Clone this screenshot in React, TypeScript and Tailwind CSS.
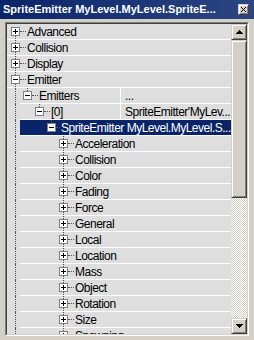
import React from 'react';

type Row = { d: number; label: string; open?: boolean; value?: string; selected?: boolean; first?: boolean };

const rows: Row[] = [
  { d: 0, label: 'Advanced', first: true },
  { d: 0, label: 'Collision' },
  { d: 0, label: 'Display' },
  { d: 0, label: 'Emitter', open: true },
  { d: 1, label: 'Emitters', open: true, value: '...' },
  { d: 2, label: '[0]', open: true, value: "SpriteEmitter'MyLev..." },
  { d: 3, label: 'SpriteEmitter MyLevel.MyLevel.S...', open: true, selected: true },
  ...[
    'Acceleration',
    'Collision',
    'Color',
    'Fading',
    'Force',
    'General',
    'Local',
    'Location',
    'Mass',
    'Object',
    'Rotation',
    'Size',
    'Spawning',
  ].map((l) => ({ d: 4, label: l })),
];

function Box({ open }: { open?: boolean }) {
  return (
    <svg width="9" height="9" viewBox="0 0 9 9" shapeRendering="crispEdges" className="block shrink-0">
      <rect x="0.5" y="0.5" width="8" height="8" fill="#fff" stroke="#808080" />
      <path d="M2 4.5h5" stroke="#000" />
      {!open && <path d="M4.5 2v5" stroke="#000" />}
    </svg>
  );
}

function BoxCell({ open, above, below }: { open?: boolean; above?: boolean; below?: boolean }) {
  return (
    <div className="flex h-full w-[9px] shrink-0 flex-col items-center">
      <div className={above ? 'h-[3px] w-0 border-l border-dotted border-[#505050]' : 'h-[3px] w-0'} />
      <Box open={open} />
      <div className={below ? 'w-0 flex-1 border-l border-dotted border-[#505050]' : 'w-0 flex-1'} />
    </div>
  );
}

function Stub({ short }: { short?: boolean }) {
  return (
    <div
      className={
        short
          ? 'h-0 w-[4px] shrink-0 border-t border-dotted border-[#505050]'
          : 'h-0 w-[6px] shrink-0 border-t border-dotted border-[#505050]'
      }
    />
  );
}

function TreeRow({ r }: { r: Row }) {
  if (r.d === 0) {
    return (
      <div className="flex h-4 shrink-0 items-center border-b border-white pl-[4px]">
        <BoxCell open={r.open} above={!r.first} below />
        <Stub />
        <span className="ml-px whitespace-nowrap">{r.label}</span>
      </div>
    );
  }
  const pad =
    r.d === 1 ? 'pl-[3px]' : r.d === 2 ? 'pl-[15px]' : r.d === 3 ? 'pl-[27px]' : 'pl-[39px]';
  const single = r.d < 4;
  const name = (
    <>
      <BoxCell open={r.open} above below={!single} />
      <Stub short={r.selected} />
      <span className="ml-px whitespace-nowrap">{r.label}</span>
    </>
  );
  return (
    <div className="flex h-4 shrink-0">
      <div className="flex h-full w-[13px] shrink-0 pl-[8px]">
        <div className="h-full w-0 border-l border-dotted border-[#505050]" />
      </div>
      {r.value !== undefined ? (
        <div className="flex h-full flex-1 border-b border-white">
          <div className={`flex h-full w-[101px] shrink-0 items-center overflow-hidden border-r border-white ${pad}`}>
            {name}
          </div>
          <div className="flex h-full items-center whitespace-nowrap pl-[4px]">{r.value}</div>
        </div>
      ) : (
        <div
          className={
            r.selected
              ? `flex h-full flex-1 items-center overflow-hidden border-b border-white bg-[#0a246a] text-white ${pad}`
              : `flex h-full flex-1 items-center border-b border-white ${pad}`
          }
        >
          {name}
        </div>
      )}
    </div>
  );
}

function Arrow({ down }: { down?: boolean }) {
  return (
    <svg width="7" height="4" viewBox="0 0 7 4" shapeRendering="crispEdges" className="block">
      <path
        d={down ? 'M0 0h7v1h-1v1h-1v1h-1v1h-1v-1h-1v-1h-1v-1h-1z' : 'M3 0h1v1h1v1h1v1h1v1H0v-1h1v-1h1v-1h1z'}
        fill="#000"
      />
    </svg>
  );
}

const bevel =
  'border border-t-[#d4d0c8] border-l-[#d4d0c8] border-r-[#404040] border-b-[#404040] bg-[#d4d0c8] shadow-[inset_1px_1px_0_#ffffff,inset_-1px_-1px_0_#808080]';

export default function App() {
  return (
    <div
      className="flex h-[340px] w-[254px] flex-col overflow-hidden bg-[#d4d0c8] text-[12px] tracking-[-0.5px] text-black"
      style={{ fontFamily: '"Liberation Sans", Arial, sans-serif' }}
    >
      <div className="flex h-[19px] shrink-0 items-center justify-between bg-linear-to-r from-[#0a246a] to-[#2c4683] pl-[3px] pr-[5px]">
        <span className="whitespace-nowrap text-[11px] font-bold tracking-normal text-white">
          SpriteEmitter MyLevel.MyLevel.SpriteE...
        </span>
        <div className={`flex h-[11px] w-[11px] items-center justify-center ${bevel}`}>
          <svg width="5" height="5" viewBox="0 0 5 5" shapeRendering="crispEdges" className="block">
            <path d="M0 0h1v1h1v1h1v-1h1v-1h1v1h-1v1h-1v1h1v1h1v1h-1v-1h-1v-1h-1v1h-1v1H0v-1h1v-1h1v-1H1V1H0z" fill="#000" />
          </svg>
        </div>
      </div>
      <div className="mx-[5px] mt-[3px] h-[314px] shrink-0 border border-b-white border-l-[#808080] border-r-white border-t-[#808080]">
        <div className="flex h-full border border-b-[#d4d0c8] border-l-[#404040] border-r-[#d4d0c8] border-t-[#404040]">
          <div className="flex h-full w-[224px] shrink-0 flex-col overflow-hidden bg-[#dedede]">
            {rows.map((r, i) => (
              <TreeRow key={i} r={r} />
            ))}
          </div>
          <div className="flex h-full w-[16px] shrink-0 flex-col">
            <div className={`flex h-[16px] shrink-0 items-center justify-center ${bevel}`}>
              <Arrow />
            </div>
            <div className={`h-[158px] shrink-0 ${bevel}`} />
            <div className="flex-1 bg-[image:repeating-conic-gradient(#d4d0c8_0_25%,#ffffff_0_50%)] bg-[length:2px_2px]" />
            <div className={`flex h-[16px] shrink-0 items-center justify-center ${bevel}`}>
              <Arrow down />
            </div>
          </div>
        </div>
      </div>
    </div>
  );
}
